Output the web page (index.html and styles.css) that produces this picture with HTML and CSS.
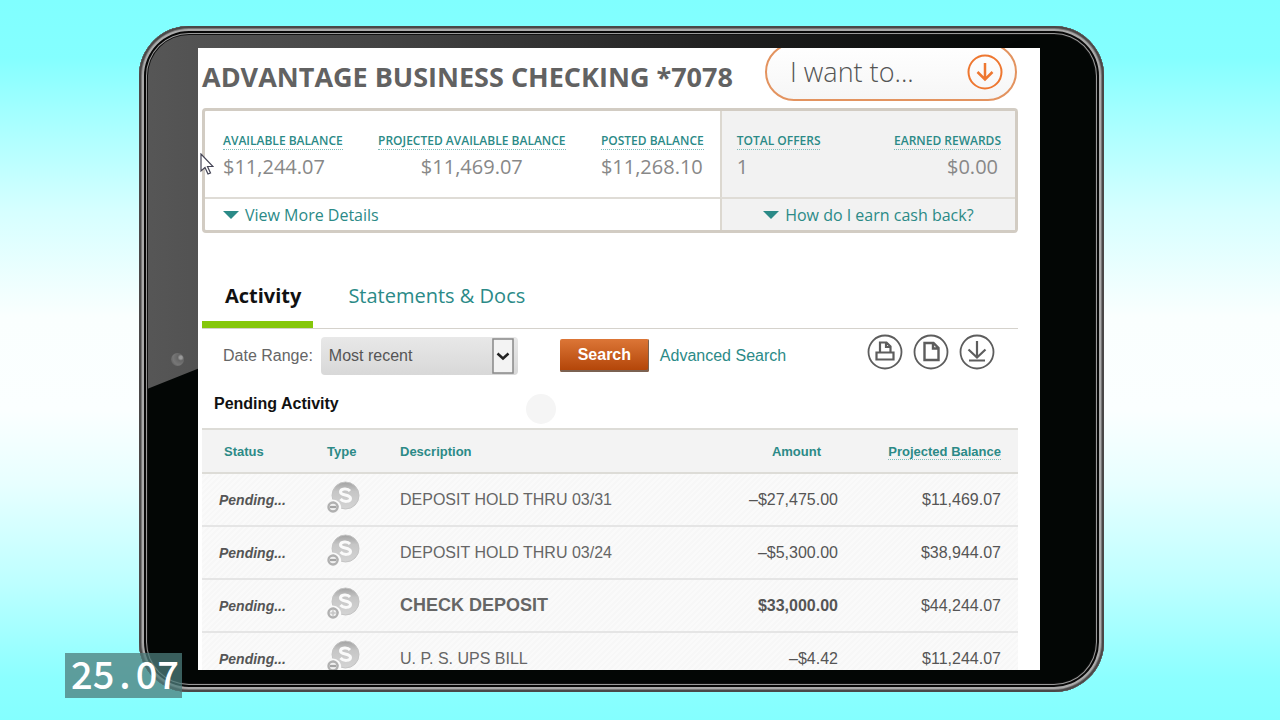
FILE: index.html
```
<!DOCTYPE html>
<html lang="en">
<head>
<meta charset="utf-8">
<title>Advantage Business Checking</title>
<link rel="stylesheet" href="styles.css">
</head>
<body>
<svg class="defs" aria-hidden="true">
  <defs>
    <linearGradient id="coinFill" x1="0" y1="0" x2="0" y2="1"><stop offset="0" stop-color="#a2a2a2"/><stop offset="0.35" stop-color="#c6c6c6"/><stop offset="1" stop-color="#d4d4d4"/></linearGradient>
    <symbol id="coin" viewBox="0 0 34 34">
      <circle cx="18.500" cy="15.500" r="13.500" fill="url(#coinFill)" stroke="#c4c4c4"/>
      <path d="M5 20.500a7.500 7.500 0 0 1 8 9" fill="none" stroke="#fafafa" stroke-width="2"/>
      <path d="M23 11C20.500 8 13.500 8.500 13.500 12C13.500 16 23.500 14 23.500 18.500C23.500 22 16.500 22.500 13.500 19" fill="none" stroke="#fafafa" stroke-width="3"/>
      <circle cx="6" cy="27" r="4.500" fill="#f0f0f0" stroke="#b0b0b0" stroke-width="2.400"/>
    </symbol>
    <symbol id="coin-minus" viewBox="0 0 34 34"><use href="#coin"/><path d="M3 27h6" stroke="#a4a4a4" stroke-width="2.200"/></symbol>
    <symbol id="coin-plus" viewBox="0 0 34 34"><use href="#coin"/><path d="M3.300 27h5.400M6 24.300v5.400" stroke="#c4c4c4" stroke-width="1.500"/></symbol>
  </defs>
</svg>
<div class="device">
  <span class="camera"></span>
  <main class="screen">
    <header class="top">
      <h1 class="account">ADVANTAGE BUSINESS CHECKING *7078</h1>
      <button class="want" type="button"><span>I want to...</span>
        <svg class="want-icon" viewBox="0 0 36 36" aria-hidden="true"><circle cx="18" cy="18" r="16.500"/><path d="M18 9v16M10.500 18l7.500 7.500 7.500-7.500" stroke-width="2.500"/></svg>
      </button>
    </header>

    <section class="summary">
      <div class="balances">
        <div class="figure"><a class="figure-label" href="#">AVAILABLE BALANCE</a><span class="figure-value">$11,244.07</span></div>
        <div class="figure figure-mid"><a class="figure-label" href="#">PROJECTED AVAILABLE BALANCE</a><span class="figure-value">$11,469.07</span></div>
        <div class="figure"><a class="figure-label" href="#">POSTED BALANCE</a><span class="figure-value">$11,268.10</span></div>
      </div>
      <div class="rewards">
        <div class="figure"><a class="figure-label" href="#">TOTAL OFFERS</a><span class="figure-value">1</span></div>
        <div class="figure figure-end"><a class="figure-label" href="#">EARNED REWARDS</a><span class="figure-value">$0.00</span></div>
      </div>
      <div class="more"><a class="more-link" href="#">View More Details</a></div>
      <div class="more more-rewards"><a class="more-link" href="#">How do I earn cash back?</a></div>
    </section>

    <nav class="tabs">
      <a class="tab tab-on" href="#">Activity</a>
      <a class="tab" href="#">Statements &amp; Docs</a>
    </nav>

    <form class="filter">
      <label class="range-label" for="range">Date Range:</label>
      <div class="range-box">
        <select class="range" id="range"><option>Most recent</option></select>
        <svg class="range-arrow" viewBox="0 0 22 36" aria-hidden="true"><rect x="1" y="1" width="20" height="34" fill="#f3f3f3" stroke="#888" stroke-width="1.500"/><path d="M5.500 15.500l5.500 5 5.500-5" fill="none" stroke="#222" stroke-width="2.500"/></svg>
      </div>
      <button class="search" type="button">Search</button>
      <a class="advanced" href="#">Advanced Search</a>
      <div class="tools">
        <button class="tool" type="button" aria-label="Print"><svg viewBox="0 0 36 36"><circle cx="18" cy="18" r="16.500"/><path d="M9.500 18.500h17v7h-17zM13 18.500v-10h6.500l4 4v6M19 9v4h4" stroke-width="2.200"/></svg></button>
        <button class="tool" type="button" aria-label="Export"><svg viewBox="0 0 36 36"><circle cx="18" cy="18" r="16.500"/><path d="M11.500 9h9l5 5v12h-14zM20 9v5.500h5.500" stroke-width="2.400"/></svg></button>
        <button class="tool" type="button" aria-label="Download"><svg viewBox="0 0 36 36"><circle cx="18" cy="18" r="16.500"/><path d="M18 7v16M9.500 15.500l8.500 8 8.500-8M10 26.500h16" stroke-width="2.200"/></svg></button>
      </div>
    </form>

    <h2 class="pending-title">Pending Activity <span class="spinner"></span></h2>

    <table class="activity">
      <thead>
        <tr><th class="status">Status</th><th class="type">Type</th><th class="desc">Description</th><th class="amount">Amount</th><th class="balance"><a class="sort" href="#">Projected Balance</a></th></tr>
      </thead>
      <tbody>
        <tr><td class="status">Pending...</td><td class="type"><svg class="coin"><use href="#coin-minus"/></svg></td><td class="desc">DEPOSIT HOLD THRU 03/31</td><td class="amount">–$27,475.00</td><td class="balance">$11,469.07</td></tr>
        <tr><td class="status">Pending...</td><td class="type"><svg class="coin"><use href="#coin-minus"/></svg></td><td class="desc">DEPOSIT HOLD THRU 03/24</td><td class="amount">–$5,300.00</td><td class="balance">$38,944.07</td></tr>
        <tr class="credit"><td class="status">Pending...</td><td class="type"><svg class="coin"><use href="#coin-plus"/></svg></td><td class="desc">CHECK DEPOSIT</td><td class="amount">$33,000.00</td><td class="balance">$44,244.07</td></tr>
        <tr><td class="status">Pending...</td><td class="type"><svg class="coin"><use href="#coin-minus"/></svg></td><td class="desc">U. P. S. UPS BILL</td><td class="amount">–$4.42</td><td class="balance">$11,244.07</td></tr>
      </tbody>
    </table>
  </main>
  <svg class="pointer" viewBox="0 0 14 23" aria-hidden="true"><path d="M1 1v17l4-3.500 3 6.500 2.500-1-3-6.500h5.500z" fill="#fff" stroke="#445" stroke-width="1.200"/></svg>
</div>
<div class="counter">25<span class="dot">.</span>07</div>
</body>
</html>
```
FILE: styles.css
```
* { box-sizing: border-box; }
body {
  margin: 0;
  height: 100vh;
  padding: 26px 176px 28px 139px;
  overflow: hidden;
  background: linear-gradient(#80ffff 0%, #84ffff 8%, #a4ffff 16%, #d5ffff 29%, #fafffe 44%, #fbffff 57%, #e8ffff 67%, #bdffff 81%, #8cffff 94%, #84ffff 100%);
  font-family: "Liberation Sans", Arial, sans-serif;
  color: #666;
}
a { color: #2b8a87; text-decoration: none; }
.defs { position: absolute; width: 0; height: 0; }

.device {
  position: relative;
  height: 100%;
  padding: 22px 64px 22px 59px;
  border-radius: 50px;
  background: #030605;
}
.device::before {
  content: "";
  position: absolute;
  inset: 0;
  border-radius: 50px;
  background: linear-gradient(90deg, #575757, #444 25%, #202020 60%, #030605 92%);
  clip-path: polygon(0 0, 95% 0, 0 55%);
}
.device::after {
  content: "";
  position: absolute;
  inset: 0;
  border-radius: 50px;
  box-shadow: inset 0 0 0 2px #4a4848, inset 0 0 0 3px #777, inset 0 0 0 5px #aaa, inset 0 0 0 7px #080808, inset 0 0 0 8px #999, inset 0 0 0 9px #111;
}
.camera {
  position: absolute;
  left: 32px;
  top: 50%;
  width: 13px;
  height: 13px;
  margin-top: -6px;
  border-radius: 50%;
  background: radial-gradient(circle at 75% 35%, #999 0 10%, #666 25%, #777 60%, #505050 100%);
}
.screen {
  position: relative;
  height: 100%;
  padding: 0 22px 0 4px;
  overflow: hidden;
  background: #fff;
}

.top { display: flex; justify-content: space-between; height: 60px; }
.account {
  margin: 0;
  padding-top: 11px;
  font: 700 27px/36px "Open Sans", sans-serif;
  color: #626262;
  white-space: nowrap;
}
.want {
  display: flex;
  align-items: center;
  justify-content: space-between;
  width: 252px;
  height: 58px;
  margin: -5px 1px 0 0;
  padding: 0 12px 0 23px;
  border: 2px solid #e3935f;
  border-radius: 30px;
  background: linear-gradient(#fff, #f6f6f6);
  font: 300 27px/36px "Open Sans", sans-serif;
  color: #555;
}
.want-icon { width: 36px; height: 36px; fill: none; stroke: #ee7730; stroke-width: 2; }

.summary {
  display: grid;
  grid-template-columns: 516fr 296fr;
  border: 3px solid #d2ccc3;
  border-radius: 4px;
  font-family: "Open Sans", sans-serif;
}
.balances, .rewards { display: flex; justify-content: space-between; height: 86px; padding: 21px 16px 0 18px; }
.rewards, .more-rewards { background: #f2f2f2; border-left: 2px solid #dcd8d0; }
.rewards { padding: 21px 14px 0 15px; }
.figure { display: flex; flex-direction: column; align-items: flex-start; }
.figure-mid { align-items: center; }
.figure-end { align-items: flex-end; }
.figure-label { border-bottom: 1px dotted #7fbcba; font-size: 12px; font-weight: 600; line-height: 17px; }
.figure-value { font-size: 20px; line-height: 34px; color: #888; }
.figure-end .figure-value { padding-right: 3px; }
.more { height: 33px; padding: 0 18px; border-top: 2px solid #dfdcd6; font-size: 16px; line-height: 32px; }
.more-rewards { text-align: center; }
.more-link::before {
  content: "";
  display: inline-block;
  margin-right: 6px;
  border: 8px solid transparent;
  border-top-color: #2b8a87;
  border-bottom-width: 0;
  vertical-align: 2px;
}

.tabs {
  display: flex;
  height: 62px;
  margin-top: 34px;
  border-bottom: 1px solid #d5d2cc;
  font: 20px/57px "Open Sans", sans-serif;
}
.tab { margin-left: 35px; }
.tab-on { margin: 0; padding: 0 12px 0 23px; border-bottom: 7px solid #85c70a; font-weight: 700; color: #111; }

.filter { display: flex; align-items: center; height: 53px; padding: 0 23px 0 21px; font-size: 16px; }
.range-box { position: relative; width: 197px; margin: 0 42px 0 8px; }
.range {
  display: block;
  width: 100%;
  height: 38px;
  padding: 0 8px;
  border: 0;
  border-radius: 4px;
  appearance: none;
  background: linear-gradient(#e8e8e8, #d8d8d8);
  font: 16px "Liberation Sans", Arial, sans-serif;
  color: #555;
}
.range-arrow { position: absolute; right: 4px; top: 1px; width: 22px; height: 36px; }
.search {
  width: 89px;
  height: 33px;
  margin-right: 11px;
  padding: 0 0 2px;
  border: 0;
  border-radius: 2px;
  background: linear-gradient(#dc7637, #b14306);
  box-shadow: inset -1px -2px 0 #7b6252;
  font: 700 16px "Liberation Sans", Arial, sans-serif;
  color: #fff;
}
.tools { display: flex; gap: 10px; margin: -7px 0 0 auto; }
.tool { width: 36px; height: 36px; padding: 0; border: 0; background: none; }
.tool svg { display: block; fill: none; stroke: #5d5d5d; stroke-width: 1.800; }

.pending-title {
  display: flex;
  align-items: center;
  height: 46px;
  margin: 0 0 0 12px;
  padding-bottom: 2px;
  font-size: 16px;
  color: #111;
}
.spinner { width: 30px; height: 30px; margin: 10px 0 0 187px; border-radius: 50%; background: #f5f5f5; }

.activity { width: 100%; border-collapse: collapse; table-layout: fixed; font-size: 16px; }
.activity th { height: 44px; padding: 0; border-top: 2px solid #dddcd7; border-bottom: 2px solid #dddcd7; background: #f3f3f3; font-size: 13px; color: #2b8a87; text-align: left; }
.activity td { height: 53px; padding: 0; border-bottom: 2px solid #e5e5e5; }
.activity tbody { background: repeating-linear-gradient(135deg, #fafafa 0 2px, #f7f7f7 2px 4px); }
.activity .status { width: 125px; padding-left: 22px; }
.activity td.status { padding-left: 17px; font-size: 14px; font-weight: 700; font-style: italic; color: #555; }
.activity .type { width: 73px; }
.coin { display: block; width: 34px; height: 34px; margin-top: -6px; }
.activity .amount { width: 136px; text-align: right; }
.activity th.amount { padding-right: 17px; }
.activity .balance { width: 180px; padding-right: 17px; text-align: right; }
.activity td.amount, .activity td.balance { color: #555; }
.credit .desc, .credit .amount { font-weight: 700; }
.credit .desc { font-size: 18px; }
.sort { border-bottom: 1px dotted #7fbcba; }

.pointer { position: absolute; left: 61px; top: 127px; width: 14px; height: 23px; }
.counter {
  position: absolute;
  left: 65px;
  bottom: 22px;
  height: 45px;
  padding: 0 3px 0 6px;
  background: rgba(76, 124, 123, 0.75);
  font: 500 38px/39px "Noto Sans CJK SC", sans-serif;
  color: #fff;
}
.dot { padding: 0 5px; }
```
